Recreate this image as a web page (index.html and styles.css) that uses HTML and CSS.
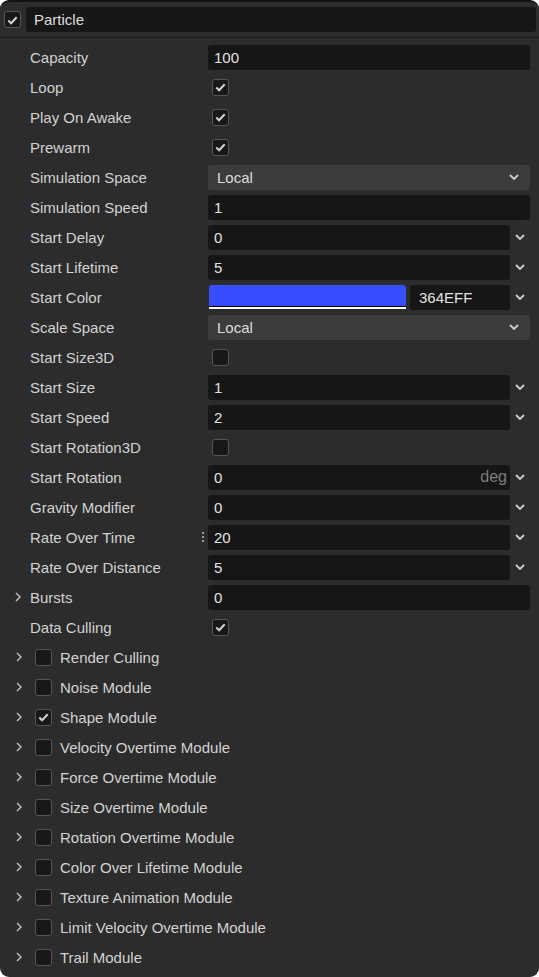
FILE: index.html
```html
<!DOCTYPE html>
<html>
<head>
<meta charset="utf-8">
<link rel="stylesheet" href="styles.css">
</head>
<body>
<div class="panel">
  <div class="header">
    <span class="cb on"><svg viewBox="0 0 16 16"><path d="M3.5 8.5 L6.5 11.5 L12.5 5"/></svg></span>
    <div class="hbox">Particle</div>
  </div>
  <div class="rows">
    <div class="row"><span class="label">Capacity</span><div class="inp full">100</div></div>
    <div class="row"><span class="label">Loop</span><span class="cb on vcb"><svg viewBox="0 0 16 16"><path d="M3.5 8.5 L6.5 11.5 L12.5 5"/></svg></span></div>
    <div class="row"><span class="label">Play On Awake</span><span class="cb on vcb"><svg viewBox="0 0 16 16"><path d="M3.5 8.5 L6.5 11.5 L12.5 5"/></svg></span></div>
    <div class="row"><span class="label">Prewarm</span><span class="cb on vcb"><svg viewBox="0 0 16 16"><path d="M3.5 8.5 L6.5 11.5 L12.5 5"/></svg></span></div>
    <div class="row"><span class="label">Simulation Space</span><div class="sel">Local<svg class="dd" viewBox="0 0 10 6"><path d="M1 1 L5 5 L9 1"/></svg></div></div>
    <div class="row"><span class="label">Simulation Speed</span><div class="inp full">1</div></div>
    <div class="row"><span class="label">Start Delay</span><div class="inp">0</div><svg class="chev" viewBox="0 0 10 6"><path d="M1 1 L5 5 L9 1"/></svg></div>
    <div class="row"><span class="label">Start Lifetime</span><div class="inp">5</div><svg class="chev" viewBox="0 0 10 6"><path d="M1 1 L5 5 L9 1"/></svg></div>
    <div class="row"><span class="label">Start Color</span><div class="swatch"><div class="sw-color"></div><div class="sw-line"></div></div><div class="hex">364EFF</div><svg class="chev" viewBox="0 0 10 6"><path d="M1 1 L5 5 L9 1"/></svg></div>
    <div class="row"><span class="label">Scale Space</span><div class="sel">Local<svg class="dd" viewBox="0 0 10 6"><path d="M1 1 L5 5 L9 1"/></svg></div></div>
    <div class="row"><span class="label">Start Size3D</span><span class="cb vcb"></span></div>
    <div class="row"><span class="label">Start Size</span><div class="inp">1</div><svg class="chev" viewBox="0 0 10 6"><path d="M1 1 L5 5 L9 1"/></svg></div>
    <div class="row"><span class="label">Start Speed</span><div class="inp">2</div><svg class="chev" viewBox="0 0 10 6"><path d="M1 1 L5 5 L9 1"/></svg></div>
    <div class="row"><span class="label">Start Rotation3D</span><span class="cb vcb"></span></div>
    <div class="row"><span class="label">Start Rotation</span><div class="inp"><span>0</span><span class="unit">deg</span></div><svg class="chev" viewBox="0 0 10 6"><path d="M1 1 L5 5 L9 1"/></svg></div>
    <div class="row"><span class="label">Gravity Modifier</span><div class="inp">0</div><svg class="chev" viewBox="0 0 10 6"><path d="M1 1 L5 5 L9 1"/></svg></div>
    <div class="row"><span class="label lab-dots">Rate Over Time<span class="dots"><i></i><i></i><i></i></span></span><div class="inp">20</div><svg class="chev" viewBox="0 0 10 6"><path d="M1 1 L5 5 L9 1"/></svg></div>
    <div class="row"><span class="label">Rate Over Distance</span><div class="inp">5</div><svg class="chev" viewBox="0 0 10 6"><path d="M1 1 L5 5 L9 1"/></svg></div>
    <div class="row"><span class="label lab-exp"><svg class="rt" viewBox="0 0 6 10"><path d="M1 1 L5 5 L1 9"/></svg>Bursts</span><div class="inp full">0</div></div>
    <div class="row"><span class="label">Data Culling</span><span class="cb on vcb"><svg viewBox="0 0 16 16"><path d="M3.5 8.5 L6.5 11.5 L12.5 5"/></svg></span></div>
    <div class="row mod"><svg class="rt" viewBox="0 0 6 10"><path d="M1 1 L5 5 L1 9"/></svg><span class="cb"></span><span class="mlabel">Render Culling</span></div>
    <div class="row mod"><svg class="rt" viewBox="0 0 6 10"><path d="M1 1 L5 5 L1 9"/></svg><span class="cb"></span><span class="mlabel">Noise Module</span></div>
    <div class="row mod"><svg class="rt" viewBox="0 0 6 10"><path d="M1 1 L5 5 L1 9"/></svg><span class="cb on"><svg viewBox="0 0 16 16"><path d="M3.5 8.5 L6.5 11.5 L12.5 5"/></svg></span><span class="mlabel">Shape Module</span></div>
    <div class="row mod"><svg class="rt" viewBox="0 0 6 10"><path d="M1 1 L5 5 L1 9"/></svg><span class="cb"></span><span class="mlabel">Velocity Overtime Module</span></div>
    <div class="row mod"><svg class="rt" viewBox="0 0 6 10"><path d="M1 1 L5 5 L1 9"/></svg><span class="cb"></span><span class="mlabel">Force Overtime Module</span></div>
    <div class="row mod"><svg class="rt" viewBox="0 0 6 10"><path d="M1 1 L5 5 L1 9"/></svg><span class="cb"></span><span class="mlabel">Size Overtime Module</span></div>
    <div class="row mod"><svg class="rt" viewBox="0 0 6 10"><path d="M1 1 L5 5 L1 9"/></svg><span class="cb"></span><span class="mlabel">Rotation Overtime Module</span></div>
    <div class="row mod"><svg class="rt" viewBox="0 0 6 10"><path d="M1 1 L5 5 L1 9"/></svg><span class="cb"></span><span class="mlabel">Color Over Lifetime Module</span></div>
    <div class="row mod"><svg class="rt" viewBox="0 0 6 10"><path d="M1 1 L5 5 L1 9"/></svg><span class="cb"></span><span class="mlabel">Texture Animation Module</span></div>
    <div class="row mod"><svg class="rt" viewBox="0 0 6 10"><path d="M1 1 L5 5 L1 9"/></svg><span class="cb"></span><span class="mlabel">Limit Velocity Overtime Module</span></div>
    <div class="row mod"><svg class="rt" viewBox="0 0 6 10"><path d="M1 1 L5 5 L1 9"/></svg><span class="cb"></span><span class="mlabel">Trail Module</span></div>
  </div>
</div>
</body>
</html>
```
FILE: styles.css
```css
html, body {
  margin: 0;
  padding: 0;
  background: #ffffff;
}
body {
  font-family: "Liberation Sans", Arial, sans-serif;
  font-size: 15px;
  color: #d2d2d2;
}
.panel {
  width: 539px;
  height: 977px;
  box-sizing: border-box;
  background: #2c2c2c;
  border-radius: 9px;
  border-top: 2px solid #121212;
  overflow: hidden;
}
.header {
  height: 35px;
  display: flex;
  align-items: center;
  padding-left: 4px;
  padding-right: 3px;
  gap: 5px;
  background: #2d2d2d;
  border-bottom: 1px solid #1b1b1b;
}
.hbox {
  flex: 1;
  height: 25px;
  background: #161616;
  border-radius: 3px;
  display: flex;
  align-items: center;
  padding-left: 8px;
  color: #dedede;
}
.rows {
  padding-top: 4px;
}
.row {
  height: 30px;
  display: flex;
  align-items: center;
}
.label {
  width: 208px;
  padding-left: 30px;
  box-sizing: border-box;
  flex: none;
  position: relative;
  white-space: nowrap;
}
.lab-exp {
  padding-left: 15px;
  display: flex;
  align-items: center;
  gap: 9px;
}
.dots {
  position: absolute;
  display: flex;
  flex-direction: column;
  gap: 2px;
}
.dots i {
  display: block;
  width: 2px;
  height: 2px;
  background: #9a9a9a;
}
.lab-dots .dots {
  left: 202px;
  top: 50%;
  transform: translateY(-50%);
}
.inp {
  width: 302px;
  height: 25px;
  box-sizing: border-box;
  background: #161616;
  border-radius: 3px;
  display: flex;
  align-items: center;
  justify-content: space-between;
  padding: 0 3px 0 6px;
  color: #e2e2e2;
}
.inp.full {
  width: 322px;
}
.unit {
  color: #7e7e7e;
  font-size: 16px;
}
.sel {
  width: 322px;
  height: 25px;
  box-sizing: border-box;
  background: #3c3c3c;
  border-radius: 3px;
  display: flex;
  align-items: center;
  justify-content: space-between;
  padding: 0 11px 0 9px;
  color: #dcdcdc;
}
.dd {
  width: 10px;
  height: 6px;
  fill: none;
  stroke: #cfcfcf;
  stroke-width: 1.8;
}
.chev {
  width: 10px;
  height: 6px;
  margin-left: 5px;
  fill: none;
  stroke: #cfcfcf;
  stroke-width: 1.8;
}
.rt {
  width: 6px;
  height: 10px;
  fill: none;
  stroke: #bdbdbd;
  stroke-width: 1.5;
  flex: none;
}
.cb {
  width: 17px;
  height: 17px;
  box-sizing: border-box;
  border: 1px solid #565656;
  border-radius: 3px;
  background: #181818;
  display: flex;
  align-items: center;
  justify-content: center;
  flex: none;
}
.cb svg {
  width: 16px;
  height: 16px;
  fill: none;
  stroke: #d0d0d0;
  stroke-width: 2.2;
}
.vcb {
  margin-left: 4px;
}
.swatch {
  width: 197px;
  height: 24px;
  display: flex;
  flex-direction: column;
  margin-left: 1px;
  border-radius: 3px 3px 0 0;
  overflow: hidden;
}
.sw-color {
  flex: 1;
  background: #364eff;
}
.sw-line {
  height: 2px;
  background: #ffffff;
  border-top: 1px solid #000000;
}
.hex {
  width: 100px;
  height: 25px;
  box-sizing: border-box;
  margin-left: 4px;
  background: #161616;
  border-radius: 3px;
  display: flex;
  align-items: center;
  padding-left: 9px;
  color: #e2e2e2;
}
.row.mod {
  padding-left: 16px;
}
.row.mod .cb {
  margin-left: 13px;
}
.mlabel {
  margin-left: 8px;
}
```
